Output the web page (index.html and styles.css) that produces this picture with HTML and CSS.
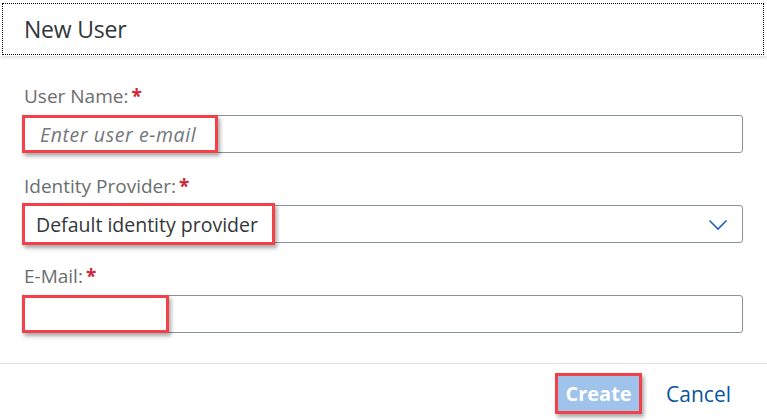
FILE: index.html
```html
<!DOCTYPE html>
<html lang="en">
<head>
<meta charset="utf-8">
<title>New User</title>
<link rel="stylesheet" href="styles.css">
</head>
<body>
<div class="dialog">
  <header class="header">
    <div class="title-focus"><h1 class="title">New User</h1></div>
  </header>
  <main class="content">
    <div class="field">
      <label class="label">User Name:<span class="req">*</span></label>
      <div class="input-wrap">
        <div class="input"><span class="placeholder">Enter user e-mail</span></div>
        <div class="mark mark-user"></div>
      </div>
    </div>
    <div class="field">
      <label class="label">Identity Provider:<span class="req">*</span></label>
      <div class="input-wrap">
        <div class="input select">
          <span class="value">Default identity provider</span>
          <svg class="chev" width="20" height="12" viewBox="0 0 20 12"><path d="M1.5 1.5 L10 10 L18.5 1.5" fill="none" stroke="#1b65b8" stroke-width="1.6"/></svg>
        </div>
        <div class="mark mark-idp"></div>
      </div>
    </div>
    <div class="field">
      <label class="label">E-Mail:<span class="req">*</span></label>
      <div class="input-wrap">
        <div class="input"></div>
        <div class="mark mark-mail"></div>
      </div>
    </div>
  </main>
  <footer class="footer">
    <span class="btn-mark"><button class="btn-create">Create</button></span>
    <button class="btn-cancel">Cancel</button>
  </footer>
</div>
</body>
</html>
```
FILE: styles.css
```css
html, body {
  margin: 0;
  padding: 0;
  background: #fff;
}
body {
  font-family: "Open Sans", "Noto Sans", sans-serif;
  width: 767px;
  height: 420px;
  overflow: hidden;
}
.dialog {
  display: flex;
  flex-direction: column;
  height: 420px;
}
.header {
  height: 56px;
  box-sizing: border-box;
  padding: 3px 3px 1px 2px;
  box-shadow: 0 2px 3px rgba(0, 0, 0, 0.12);
  position: relative;
  z-index: 1;
}
.title-focus {
  height: 52px;
  box-sizing: border-box;
  border: 1px dotted #000;
  display: flex;
  align-items: center;
  padding-left: 21px;
}
.title {
  margin: 0;
  font-size: 23px;
  font-weight: 400;
  color: #32363a;
  letter-spacing: -0.2px;
}
.content {
  flex: 1;
  padding: 30px 24px 0 22px;
  border-bottom: 1px solid #e2e2e2;
}
.field {
  display: flex;
  flex-direction: column;
  gap: 9px;
  margin-bottom: 23px;
}
.label {
  font-size: 19px;
  line-height: 20px;
  color: #6a6d70;
  padding-left: 2px;
}
.req {
  color: #d0283a;
  font-weight: 700;
  margin-left: 3px;
}
.input-wrap {
  position: relative;
}
.input {
  height: 38px;
  box-sizing: border-box;
  border: 1px solid #89919a;
  border-radius: 3px;
  display: flex;
  align-items: center;
  padding-left: 17px;
  font-size: 19.5px;
}
.placeholder {
  font-style: italic;
  color: #74777a;
  letter-spacing: 0.6px;
}
.select {
  justify-content: space-between;
  padding-left: 13px;
  padding-right: 14px;
}
.value {
  color: #32363a;
}
.chev {
  display: block;
  margin-top: 2px;
}
.mark {
  position: absolute;
  left: 0;
  box-sizing: border-box;
  border: 3px solid #f3414a;
  box-shadow: 2px 3px 4px rgba(0, 0, 0, 0.35);
}
.mark-user {
  top: 0;
  height: 38px;
  width: 196px;
}
.mark-idp {
  top: -2px;
  height: 42px;
  width: 253px;
}
.mark-mail {
  top: 0;
  height: 38px;
  width: 147px;
}
.footer {
  height: 56px;
  display: flex;
  align-items: center;
  justify-content: flex-end;
  padding-right: 26px;
  gap: 14px;
}
.btn-mark {
  display: block;
  border: 3px solid #f3414a;
  box-shadow: 2px 3px 4px rgba(0, 0, 0, 0.35);
  margin-top: 3px;
}
.btn-create {
  display: block;
  border: 0;
  height: 35px;
  width: 81px;
  background: #9fc3eb;
  color: #fff;
  font-family: "Open Sans", "Noto Sans", sans-serif;
  font-weight: 700;
  font-size: 20px;
  padding: 0;
}
.btn-cancel {
  border: 0;
  background: transparent;
  color: #0b54a0;
  font-family: "Open Sans", "Noto Sans", sans-serif;
  font-size: 21px;
  padding: 0 10px;
  height: 36px;
  margin-top: 3px;
}
```
